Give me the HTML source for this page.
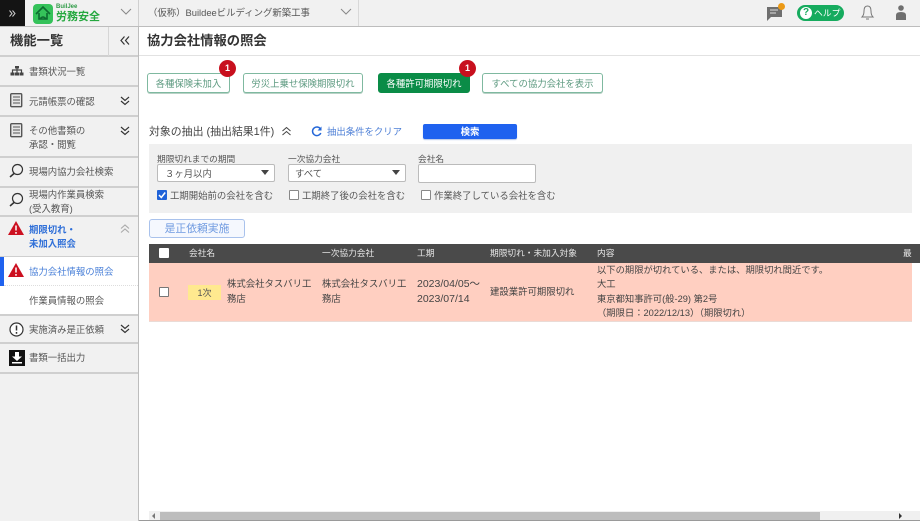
<!DOCTYPE html>
<html lang="ja"><head><meta charset="utf-8"><title>協力会社情報の照会</title>
<style>
html,body{margin:0;padding:0;background:#fff}
body{width:920px;height:521px;position:relative;overflow:hidden;font-family:"Liberation Sans","Noto Sans CJK JP",sans-serif;font-size:9.4px;color:#444}
.a{position:absolute;white-space:nowrap}
.b{position:absolute;box-sizing:border-box}
.btn{position:absolute;box-sizing:border-box;height:20px;top:73px;border:1px solid #7fb9a0;border-radius:3px;background:#fff;color:#5d9a80;text-align:center;line-height:19px;font-size:9.4px;box-shadow:0 1px 0 #b8d2c6}
.badge{position:absolute;top:60px;width:17px;height:17px;border-radius:50%;background:#c8101e;color:#fff;font-weight:bold;font-size:9px;text-align:center;line-height:17px}
.side{position:absolute;left:0;width:138px;box-sizing:border-box;background:#f1f1f1;border-bottom:2px solid #cfcfcf}
.t{color:#555;line-height:15px}
.cb{position:absolute;box-sizing:border-box;width:10px;height:10px;background:#fff;border:1px solid #888;border-radius:1px}
.sel{position:absolute;box-sizing:border-box;top:164px;height:18px;background:#fff;border:1px solid #bbb;border-radius:2px;line-height:18px;color:#555;font-size:9.4px}
.sel:after{content:"";position:absolute;right:5px;top:5px;border-left:4px solid transparent;border-right:4px solid transparent;border-top:5px solid #444}
.lab{font-size:8.7px;line-height:13px;color:#555;top:153px}
.th{top:247px;line-height:13px;color:#e6e6e6;font-size:8.7px}
svg{position:absolute;overflow:visible}
</style></head><body>

<!-- top bar -->
<div class="b" style="left:0;top:0;width:920px;height:27px;background:#f1f1f1;border-bottom:1px solid #bdbdbd"></div>
<div class="b" style="left:0;top:0;width:25px;height:26px;background:#141414"></div>
<svg style="left:9px;top:10px" width="7" height="7"><path d="M.5 .5L3 3.500L.5 6.500M3.500 .5L6 3.500L3.500 6.500" fill="none" stroke="#ccc" stroke-width="1"/></svg>
<div class="b" style="left:138px;top:0;width:1px;height:26px;background:#cfcfcf"></div>
<div class="b" style="left:358px;top:0;width:1px;height:26px;background:#d8d8d8"></div>
<div class="b" style="left:33px;top:4px;width:20px;height:20px;border-radius:4px;background:#35c25a"></div>
<svg style="left:33px;top:4px" width="20" height="20"><path d="M3 10L10 3L17 10M6 9V15H14V9M7 15Q10 11 13 15" fill="none" stroke="#0d6b30" stroke-width="1.600"/></svg>
<div class="a" style="left:56px;top:4px;font-size:6px;line-height:7px;color:#2d9a45;font-weight:bold">BuilJee</div>
<div class="a" style="left:56px;top:10px;font-size:11px;line-height:15px;color:#25a83f;font-weight:bold">労務安全</div>
<svg style="left:120px;top:8px" width="12" height="8"><path d="M1 1L6 6L11 1" fill="none" stroke="#888" stroke-width="1"/></svg>
<div class="a" style="left:148px;top:5px;font-size:9.4px;line-height:15px;color:#555">（仮称）Buildeeビルディング新築工事</div>
<svg style="left:340px;top:8px" width="12" height="8"><path d="M1 1L6 6L11 1" fill="none" stroke="#888" stroke-width="1"/></svg>
<svg style="left:767px;top:6px" width="16" height="16"><path d="M0 1H15V11H4L0 15Z" fill="#6f6f6f"/><path d="M3 4H11M3 7H9" stroke="#ddd" stroke-width="1"/></svg>
<div class="b" style="left:778px;top:3px;width:7px;height:7px;border-radius:50%;background:#ec9a16"></div>
<div class="b" style="left:797px;top:5px;width:47px;height:16px;border-radius:8px;background:#16ab5e"></div>
<div class="b" style="left:800px;top:7px;width:12px;height:12px;border-radius:50%;background:#fff;color:#16ab5e;font-size:10px;font-weight:bold;text-align:center;line-height:12px">?</div>
<div class="a" style="left:814px;top:6px;color:#fff;font-size:8.8px;line-height:14px">ヘルプ</div>
<svg style="left:860px;top:5px" width="15" height="16"><path d="M2 12Q4 10 4 6Q4 1 7.500 1Q11 1 11 6Q11 10 13 12ZM6 14H9" fill="none" stroke="#777" stroke-width="1"/></svg>
<svg style="left:896px;top:5px" width="10" height="16"><circle cx="5" cy="3" r="2.800" fill="#6f6f6f"/><path d="M0 15V10Q0 7 5 7Q10 7 10 10V15Z" fill="#6f6f6f"/></svg>

<!-- sidebar -->
<div class="b" style="left:0;top:27px;width:139px;height:494px;background:#f1f1f1;border-right:1px solid #bdbdbd"></div>
<div class="side" style="top:27px;height:30px"></div>
<div class="a" style="left:10px;top:32px;font-size:13.300px;line-height:18px;color:#333;font-weight:bold">機能一覧</div>
<div class="b" style="left:108px;top:27px;width:1px;height:29px;background:#d6d6d6"></div>
<svg style="left:120px;top:36px" width="10" height="9"><path d="M4.500 .5L1 4.500L4.500 8.500M9 .5L5.500 4.500L9 8.500" fill="none" stroke="#333" stroke-width="1.200"/></svg>

<div class="side" style="top:57px;height:30px"></div>
<svg style="left:10px;top:66px" width="14" height="10"><path d="M7 1V4M2.500 7V4H11.500V7M7 4V7" fill="none" stroke="#444" stroke-width="1.200"/><rect x="5" y="0" width="4" height="2.500" fill="#444"/><rect x="0.500" y="6.500" width="4" height="3" fill="#444"/><rect x="5" y="6.500" width="4" height="3" fill="#444"/><rect x="9.500" y="6.500" width="4" height="3" fill="#444"/></svg>
<div class="a t" style="left:29px;top:64px">書類状況一覧</div>

<div class="side" style="top:87px;height:30px"></div>
<svg style="left:10px;top:93px" width="13" height="15"><rect x=".7" y=".7" width="11" height="13" rx="1" fill="#e6e6e6" stroke="#555" stroke-width="1.400"/><path d="M3 4H10M3 7H10M3 10H10" stroke="#555" stroke-width="1"/></svg>
<div class="a t" style="left:29px;top:94px">元請帳票の確認</div>
<svg style="left:120px;top:96px" width="10" height="10"><path d="M1 1L5 4.500L9 1M1 5L5 8.500L9 5" fill="none" stroke="#333" stroke-width="1.200"/></svg>

<div class="side" style="top:117px;height:41px"></div>
<svg style="left:10px;top:123px" width="13" height="15"><rect x=".7" y=".7" width="11" height="13" rx="1" fill="#e6e6e6" stroke="#555" stroke-width="1.400"/><path d="M3 4H10M3 7H10M3 10H10" stroke="#555" stroke-width="1"/></svg>
<div class="a t" style="left:29px;top:124px;line-height:14px">その他書類の<br>承認・閲覧</div>
<svg style="left:120px;top:126px" width="10" height="10"><path d="M1 1L5 4.500L9 1M1 5L5 8.500L9 5" fill="none" stroke="#333" stroke-width="1.200"/></svg>

<div class="side" style="top:158px;height:30px"></div>
<svg style="left:9px;top:164px" width="15" height="15"><circle cx="8.500" cy="5.500" r="5" fill="none" stroke="#333" stroke-width="1.200"/><path d="M5 9.500L1 13" stroke="#333" stroke-width="1.500"/></svg>
<div class="a t" style="left:29px;top:164px">現場内協力会社検索</div>

<div class="side" style="top:188px;height:29px"></div>
<svg style="left:9px;top:193px" width="15" height="15"><circle cx="8.500" cy="5.500" r="5" fill="none" stroke="#333" stroke-width="1.200"/><path d="M5 9.500L1 13" stroke="#333" stroke-width="1.500"/></svg>
<div class="a t" style="left:29px;top:188px;line-height:14px">現場内作業員検索<br>(受入教育)</div>

<div class="side" style="top:217px;height:41px"></div>
<svg style="left:8px;top:221px" width="16" height="14"><path d="M8 0L16 14H0Z" fill="#cc1020"/><path d="M8 4.500V9.500M8 11V12.800" stroke="#fff" stroke-width="1.500"/></svg>
<div class="a" style="left:29px;top:223px;line-height:13.500px;color:#2f6fd8;font-weight:bold">期限切れ・<br>未加入照会</div>
<svg style="left:120px;top:224px" width="10" height="10"><path d="M1 4.500L5 1L9 4.500M1 8.500L5 5L9 8.500" fill="none" stroke="#aaa" stroke-width="1.100"/></svg>

<div class="b" style="left:0;top:257px;width:138px;height:59px;background:#fff;border-bottom:2px solid #cfcfcf"></div>
<div class="b" style="left:0;top:257px;width:4px;height:29px;background:#1f62ef"></div>
<div class="b" style="left:4px;top:285px;width:134px;height:0;border-top:1px dotted #ddd"></div>
<svg style="left:8px;top:263px" width="16" height="14"><path d="M8 0L16 14H0Z" fill="#cc1020"/><path d="M8 4.500V9.500M8 11V12.800" stroke="#fff" stroke-width="1.500"/></svg>
<div class="a" style="left:29px;top:264px;line-height:15px;color:#4a80d8">協力会社情報の照会</div>
<div class="a t" style="left:29px;top:293px">作業員情報の照会</div>

<div class="side" style="top:316px;height:28px"></div>
<svg style="left:9px;top:322px" width="15" height="15"><circle cx="7.500" cy="7.500" r="6.500" fill="#fff" stroke="#333" stroke-width="1.200"/><path d="M7.500 3.500V8.500M7.500 10V11.800" stroke="#333" stroke-width="1.500"/></svg>
<div class="a t" style="left:29px;top:322px">実施済み是正依頼</div>
<svg style="left:120px;top:324px" width="10" height="10"><path d="M1 1L5 4.500L9 1M1 5L5 8.500L9 5" fill="none" stroke="#333" stroke-width="1.200"/></svg>

<div class="side" style="top:344px;height:30px"></div>
<svg style="left:9px;top:350px" width="16" height="16"><rect width="16" height="16" fill="#111"/><path d="M6 2H10V6.500H13L8 11L3 6.500H6Z" fill="#fff"/><rect x="3" y="12" width="10" height="1.500" fill="#fff"/></svg>
<div class="a t" style="left:29px;top:350px">書類一括出力</div>

<!-- page title -->
<div class="b" style="left:139px;top:55px;width:781px;height:1px;background:#e2e2e2"></div>
<div class="a" style="left:147px;top:32px;font-size:13.300px;line-height:18px;color:#333;font-weight:bold">協力会社情報の照会</div>

<!-- filter buttons -->
<div class="btn" style="left:147px;width:83px">各種保険未加入</div>
<div class="btn" style="left:243px;width:120px">労災上乗せ保険期限切れ</div>
<div class="btn" style="left:378px;width:92px;background:#0a8c47;border-color:#0a8c47;color:#fff;box-shadow:none">各種許可期限切れ</div>
<div class="btn" style="left:482px;width:121px">すべての協力会社を表示</div>
<div class="badge" style="left:219px">1</div>
<div class="badge" style="left:459px">1</div>

<!-- extraction heading -->
<div class="a" style="left:149px;top:125px;font-size:10.900px;line-height:15px;color:#444">対象の抽出 (抽出結果1件)</div>
<svg style="left:282px;top:127px" width="9" height="9"><path d="M.5 4L4.500 .5L8.500 4M.5 8L4.500 4.500L8.500 8" fill="none" stroke="#444" stroke-width="1"/></svg>
<svg style="left:311px;top:126px" width="11" height="11"><path d="M9.500 3A4.300 4.300 0 1 0 9.800 7" fill="none" stroke="#2467d8" stroke-width="1.500"/><path d="M10.500 .5V4.500H6.500Z" fill="#2467d8"/></svg>
<div class="a" style="left:327px;top:124px;line-height:15px;color:#4d7fd6">抽出条件をクリア</div>
<div class="b" style="left:423px;top:124px;width:94px;height:15px;background:#1f62ef;border-radius:2px;color:#fff;text-align:center;line-height:16px;box-shadow:0 1px 1px #b4c6e8;font-weight:bold">検索</div>

<!-- filter panel -->
<div class="b" style="left:149px;top:144px;width:763px;height:69px;background:#f0f0f0"></div>
<div class="a lab" style="left:157px">期限切れまでの期間</div>
<div class="a lab" style="left:288px">一次協力会社</div>
<div class="a lab" style="left:418px">会社名</div>
<div class="sel" style="left:157px;width:118px;padding-left:7px">３ヶ月以内</div>
<div class="sel" style="left:288px;width:118px;padding-left:6px">すべて</div>
<div class="b" style="left:418px;top:164px;width:118px;height:19px;background:#fff;border:1px solid #bbb;border-radius:2px"></div>
<div class="b" style="left:157px;top:190px;width:10px;height:10px;background:#1f62d8;border-radius:1px"></div>
<svg style="left:157px;top:190px" width="10" height="10"><path d="M2 5L4.300 7.500L8.200 2.500" fill="none" stroke="#fff" stroke-width="1.500"/></svg>
<div class="a" style="left:170px;top:189px;line-height:14px;color:#555">工期開始前の会社を含む</div>
<div class="cb" style="left:289px;top:190px"></div>
<div class="a" style="left:302px;top:189px;line-height:14px;color:#555">工期終了後の会社を含む</div>
<div class="cb" style="left:421px;top:190px"></div>
<div class="a" style="left:434px;top:189px;line-height:14px;color:#555">作業終了している会社を含む</div>

<!-- correction button -->
<div class="b" style="left:149px;top:219px;width:96px;height:19px;background:#f5f8fe;border:1px solid #a9c2ec;border-radius:3px;color:#6f9ae0;text-align:center;line-height:18px;font-size:10.800px">是正依頼実施</div>

<!-- table -->
<div class="b" style="left:149px;top:244px;width:771px;height:19px;background:#4a4a4a"></div>
<div class="b" style="left:159px;top:248px;width:10px;height:10px;background:#fff;border-radius:1px"></div>
<div class="a th" style="left:189px">会社名</div>
<div class="a th" style="left:322px">一次協力会社</div>
<div class="a th" style="left:417px">工期</div>
<div class="a th" style="left:490px">期限切れ・未加入対象</div>
<div class="a th" style="left:597px">内容</div>
<div class="b th" style="left:903px;width:10px;height:13px;overflow:hidden">最</div>
<div class="b" style="left:149px;top:263px;width:763px;height:59px;background:#ffcfc1;border-bottom:1px solid #eadbd6"></div>
<div class="cb" style="left:159px;top:287px;border-color:#777"></div>
<div class="b" style="left:188px;top:285px;width:33px;height:15px;background:#ffe98f;text-align:center;line-height:16px;color:#555;font-size:9px">1次</div>
<div class="a" style="left:227px;top:277px;line-height:14.500px;color:#444">株式会社タスバリ工<br>務店</div>
<div class="a" style="left:322px;top:277px;line-height:14.500px;color:#444">株式会社タスバリ工<br>務店</div>
<div class="a" style="left:417px;top:277px;line-height:14.500px;color:#444;font-size:10.500px">2023/04/05～<br>2023/07/14</div>
<div class="a" style="left:490px;top:284px;line-height:15px;color:#444">建設業許可期限切れ</div>
<div class="a" style="left:597px;top:263px;line-height:14.400px;color:#444;font-size:9.300px">以下の期限が切れている、または、期限切れ間近です。<br>大工<br>東京都知事許可(般-29) 第2号<br>（期限日：2022/12/13）（期限切れ）</div>

<!-- scrollbar -->
<div class="b" style="left:149px;top:511px;width:771px;height:10px;background:#f0f0f0"></div>
<div class="b" style="left:160px;top:512px;width:660px;height:9px;background:#bdbdbd"></div>
<div class="b" style="left:152px;top:513px;border-top:3px solid transparent;border-bottom:3px solid transparent;border-right:3px solid #777"></div>
<div class="b" style="left:899px;top:513px;border-top:3px solid transparent;border-bottom:3px solid transparent;border-left:3px solid #333"></div>
<div class="b" style="left:139px;top:520px;width:781px;height:1px;background:#9a9a9a"></div>
</body></html>
